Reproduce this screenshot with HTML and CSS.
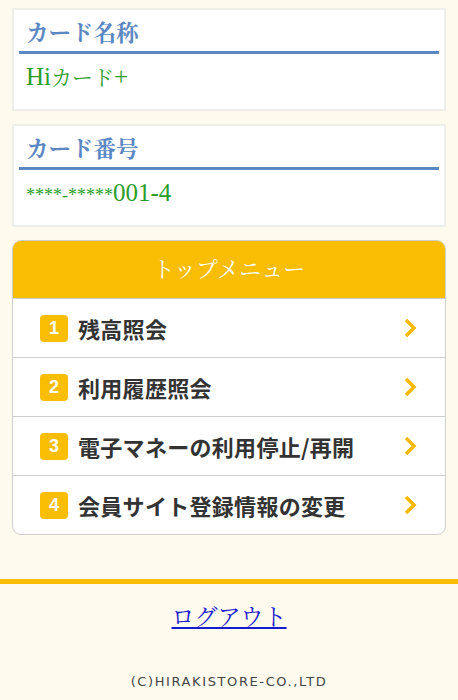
FILE: index.html
```html
<!DOCTYPE html>
<html lang="ja">
<head>
  <meta charset="UTF-8">
  <link rel="stylesheet" href="styles.css">
</head>
<body>
  <div class="info-box">
    <h2 class="info-title">カード名称</h2>
    <p class="info-value"><span class="latin">Hi</span>カード<span class="latin">+</span></p>
  </div>
  <div class="info-box">
    <h2 class="info-title">カード番号</h2>
    <p class="info-value"><span class="mask">****-*****</span><span class="latin">001-4</span></p>
  </div>

  <div class="menu">
    <div class="menu-head">トップメニュー</div>
    <a class="menu-item" href="#"><span class="num">1</span><span class="label">残高照会</span><svg class="arrow" viewBox="0 0 14 22"><path d="M3 3 L11 11 L3 19" /></svg></a>
    <a class="menu-item" href="#"><span class="num">2</span><span class="label">利用履歴照会</span><svg class="arrow" viewBox="0 0 14 22"><path d="M3 3 L11 11 L3 19" /></svg></a>
    <a class="menu-item" href="#"><span class="num">3</span><span class="label">電子マネーの利用停止/再開</span><svg class="arrow" viewBox="0 0 14 22"><path d="M3 3 L11 11 L3 19" /></svg></a>
    <a class="menu-item" href="#"><span class="num">4</span><span class="label">会員サイト登録情報の変更</span><svg class="arrow" viewBox="0 0 14 22"><path d="M3 3 L11 11 L3 19" /></svg></a>
  </div>

  <div class="footer">
    <a class="logout" href="#">ログアウト</a>
    <p class="copy">(C)HIRAKISTORE-CO.,LTD</p>
  </div>
</body>
</html>
```

FILE: styles.css
```css
body {
  margin: 0;
  padding: 8px 0 0;
  background: #fefbee;
  font-family: "Liberation Serif", "Noto Serif CJK JP", "Noto Sans CJK JP", serif;
}
.info-box {
  margin: 0 12px 13px;
  background: white;
  border: 2px solid #eeeeea;
  height: 103px;
  box-sizing: border-box;
  padding: 0 5px;
}
.info-title {
  margin: 0;
  padding: 10px 7px 0;
  height: 44px;
  box-sizing: border-box;
  font-size: 22.5px;
  font-weight: bold;
  line-height: 28px;
  color: #5b87c3;
  border-bottom: 3px solid #5b87c3;
}
.info-value {
  margin: 0;
  padding: 9px 7px 0;
  font-size: 21px;
  line-height: 28px;
  color: #2a9d2a;
}
.latin {
  font-size: 25px;
}
.mask {
  font-size: 18px;
}
.menu {
  margin: 0 12px;
  border: 1px solid #cfcfcf;
  border-radius: 9px;
  overflow: hidden;
  background: white;
}
.menu-head {
  background: #f9bd03;
  color: white;
  text-align: center;
  height: 57px;
  line-height: 57px;
  font-size: 22px;
}
.menu-item {
  display: flex;
  align-items: center;
  height: 58px;
  padding: 0 28px 0 27px;
  border-top: 1px solid #cfcfcf;
  text-decoration: none;
  color: #333333;
  font-family: "Noto Sans CJK JP", sans-serif;
}
.num {
  width: 28px;
  height: 27px;
  border-radius: 4px;
  background: #f9bd03;
  color: white;
  font-family: "Liberation Sans", sans-serif;
  font-weight: bold;
  font-size: 18px;
  line-height: 27px;
  text-align: center;
}
.label {
  flex: 1;
  margin-left: 10px;
  font-size: 22px;
  font-weight: bold;
  letter-spacing: 0.3px;
}
.arrow {
  width: 14px;
  height: 22px;
}
.arrow path {
  fill: none;
  stroke: #f7b800;
  stroke-width: 3.5;
}
.footer {
  margin-top: 44px;
  border-top: 5px solid #f9bd03;
  text-align: center;
  padding-top: 15px;
}
.logout {
  font-size: 23px;
  color: #1a1ad0;
}
.copy {
  margin: 42px 0 0;
  font-family: "DejaVu Sans", sans-serif;
  font-size: 13px;
  letter-spacing: 1.6px;
  color: #444444;
}
```
